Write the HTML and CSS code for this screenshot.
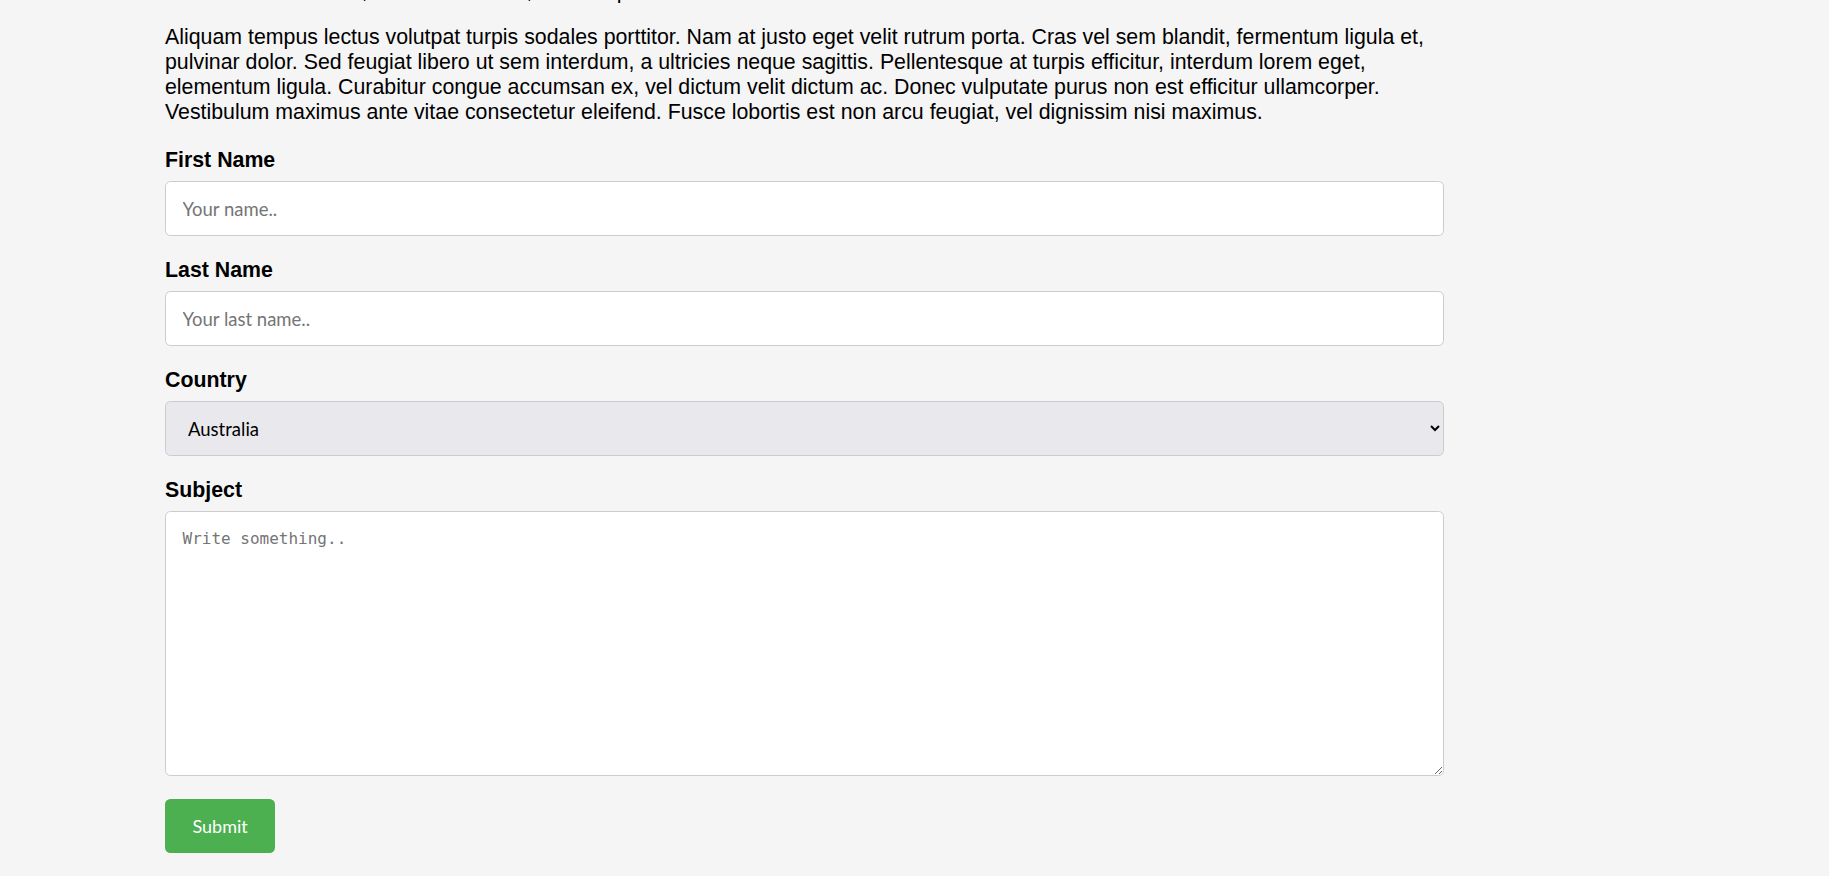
FILE: index.html
```html
<!DOCTYPE html>
<html lang="en">
<head>
<meta charset="utf-8">
<title>Contact</title>
<link rel="stylesheet" href="styles.css">
</head>
<body>
<main class="page">
  <p class="prev-text">Maecenas nunc odio, lectus vitae nibh, sed nisl pharetra tortor at lorem ac metus.</p>
  <p class="intro">Aliquam tempus lectus volutpat turpis sodales porttitor. Nam at justo eget velit rutrum porta. Cras vel sem blandit, fermentum ligula et, pulvinar dolor. Sed feugiat libero ut sem interdum, a ultricies neque sagittis. Pellentesque at turpis efficitur, interdum lorem eget, elementum ligula. Curabitur congue accumsan ex, vel dictum velit dictum ac. Donec vulputate purus non est efficitur ullamcorper. Vestibulum maximus ante vitae consectetur eleifend. Fusce lobortis est non arcu feugiat, vel dignissim nisi maximus.</p>
  <form class="contact-form" action="#">
    <label class="field-label" for="fname">First Name</label>
    <input class="text-input" type="text" id="fname" name="firstname" placeholder="Your name..">

    <label class="field-label" for="lname">Last Name</label>
    <input class="text-input" type="text" id="lname" name="lastname" placeholder="Your last name..">

    <label class="field-label" for="country">Country</label>
    <select class="select-input" id="country" name="country">
      <option value="australia">Australia</option>
      <option value="canada">Canada</option>
      <option value="usa">USA</option>
    </select>

    <label class="field-label" for="subject">Subject</label>
    <textarea class="textarea-input" id="subject" name="subject" placeholder="Write something.."></textarea>

    <button class="submit-btn" type="submit">Submit</button>
  </form>
</main>
</body>
</html>
```

FILE: styles.css
```css
html, body {
  margin: 0;
  padding: 0;
}

body {
  background: #f5f5f5;
  color: #000;
  font-family: "Liberation Sans", Arial, sans-serif;
  font-size: 21.33px;
}

.page {
  width: 1279px;
  margin-left: 165px;
}

.prev-text {
  margin: -21.3px 0 21.33px;
  white-space: nowrap;
}

.intro {
  margin: 0 0 23px;
}

.contact-form {
  display: flex;
  flex-direction: column;
  align-items: flex-start;
}

.field-label {
  display: block;
  font-weight: bold;
  line-height: 24.5px;
}

.text-input,
.select-input,
.textarea-input {
  display: block;
  width: 100%;
  box-sizing: border-box;
  margin: 8.5px 0 22px;
  border: 1px solid #ccc;
  border-radius: 5.5px;
  font-family: Lato, "Noto Sans", sans-serif;
  font-size: 18.5px;
  color: #000;
}

.text-input {
  height: 55px;
  padding: 0 16.5px;
  background: #fff;
}

.select-input {
  height: 55px;
  padding: 0 16.5px 0 18px;
  background-color: #e9e9ed;
}

.textarea-input {
  height: 265px;
  padding: 16.5px;
  margin-bottom: 23px;
  background: #fff;
  font-family: "DejaVu Sans Mono", monospace;
  font-size: 16px;
  resize: vertical;
}

.text-input::placeholder,
.textarea-input::placeholder {
  color: #757575;
  opacity: 1;
}

.submit-btn {
  height: 54px;
  padding: 0 27.5px;
  border: none;
  border-radius: 5.5px;
  background: #4caf50;
  color: #fff;
  font-family: Lato, "Noto Sans", sans-serif;
  font-size: 18px;
  cursor: pointer;
}
```
